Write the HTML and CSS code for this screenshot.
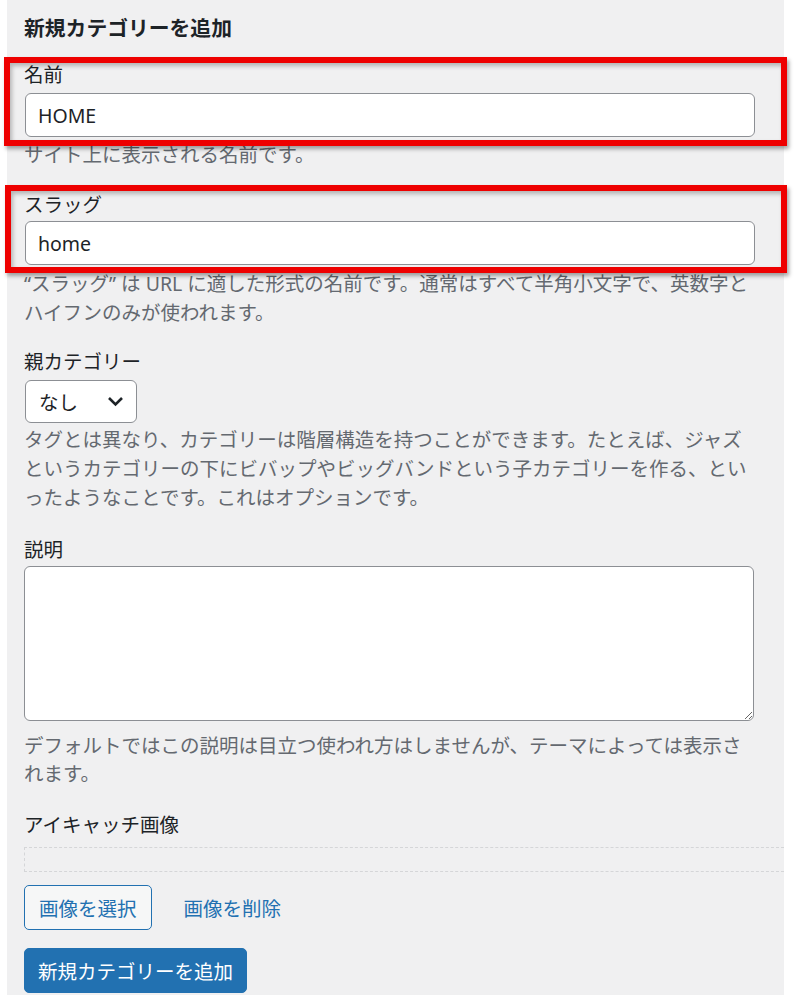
FILE: index.html
```html
<!DOCTYPE html>
<html lang="ja">

<head>
  <meta charset="utf-8" />
  <meta name="viewport" content="width=device-width, initial-scale=1.0" />
  <title>新規カテゴリーを追加</title>
  <link rel="stylesheet" href="styles.css">
</head>

<body>
  <div class="panel">
    <h2 class="title">新規カテゴリーを追加</h2>

    <div class="field">
      <span class="mark mark-name"></span>
      <label class="label" for="tag-name">名前</label>
      <input class="text" id="tag-name" type="text" value="HOME" />
      <p class="hint">サイト上に表示される名前です。</p>
    </div>

    <div class="field field-slug">
      <span class="mark mark-slug"></span>
      <label class="label" for="tag-slug">スラッグ</label>
      <input class="text" id="tag-slug" type="text" value="home" />
      <p class="hint">“スラッグ” は URL に適した形式の名前です。通常はすべて半角小文字で、英数字と<br>ハイフンのみが使われます。</p>
    </div>

    <div class="field field-parent">
      <label class="label">親カテゴリー</label>
      <div class="select">
        <span>なし</span>
        <svg width="17" height="11" viewBox="0 0 17 11">
          <polyline points="2,2 8.5,8.5 15,2" fill="none" stroke="#1d2327" stroke-width="2.6" />
        </svg>
      </div>
      <p class="hint">タグとは異なり、カテゴリーは階層構造を持つことができます。たとえば、ジャズ<br>というカテゴリーの下にビバップやビッグバンドという子カテゴリーを作る、とい<br>ったようなことです。これはオプションです。</p>
    </div>

    <div class="field field-desc">
      <label class="label" for="tag-description">説明</label>
      <textarea class="area" id="tag-description"></textarea>
      <p class="hint">デフォルトではこの説明は目立つ使われ方はしませんが、テーマによっては表示さ<br>れます。</p>
    </div>

    <div class="field field-thumb">
      <label class="label">アイキャッチ画像</label>
      <div class="thumb"></div>
      <div class="thumb-actions">
        <button class="button" type="button">画像を選択</button>
        <a class="remove" href="#">画像を削除</a>
      </div>
    </div>

    <button class="button button-primary" type="submit">新規カテゴリーを追加</button>
  </div>
</body>

</html>
```

FILE: styles.css
```css
* {
  padding: 0;
  margin: 0;
  box-sizing: border-box;
}

body {
  background: #fff;
  font-family: "Noto Sans", "Noto Sans CJK JP", sans-serif;
  font-size: 19.5px;
  color: #1d2327;
}

.panel {
  margin-left: 7px;
  width: 777px;
  min-height: 995px;
  padding: 14px 0 0 17px;
  background: #f0f0f1;
}

.title {
  font-size: 20.8px;
  font-weight: 700;
  line-height: 29px;
  margin-bottom: 17px;
}

.field {
  position: relative;
  margin-bottom: 21px;
}

.label {
  display: block;
  line-height: 29px;
  margin-bottom: 4px;
}

.hint {
  margin-top: 3px;
  line-height: 29px;
  color: #646970;
  white-space: nowrap;
}

.text {
  display: block;
  width: 730px;
  height: 44px;
  margin-left: 1px;
  padding: 0 12px;
  border: 1px solid #8c8f94;
  border-radius: 6px;
  background: #fff;
  font: inherit;
  color: #1d2327;
}

/* annotation frames */
.mark {
  position: absolute;
  left: -20px;
  right: -3px;
  border: 6px solid #ee0000;
  box-shadow: 2px 3px 4px rgba(0, 0, 0, 0.35), inset 2px 3px 4px rgba(0, 0, 0, 0.25);
  pointer-events: none;
}

.mark-name {
  top: -3px;
  height: 89px;
}

.mark-slug {
  top: -5px;
  left: -19px;
  height: 88px;
}

.field-slug .label {
  margin-bottom: 2px;
}

.field-slug .hint {
  margin-top: 4px;
}

.field-slug {
  margin-bottom: 20px;
}

.select {
  display: flex;
  align-items: center;
  justify-content: space-between;
  width: 112px;
  height: 43px;
  margin-left: 1px;
  padding: 0 12px 0 13px;
  border: 1px solid #8c8f94;
  border-radius: 6px;
  background: #fff;
}

.select svg {
  display: block;
}

.field-parent .hint {
  margin-top: 2px;
}

.field-parent {
  margin-bottom: 23px;
}

.field-desc .label {
  margin-bottom: 2px;
}

.area {
  display: block;
  width: 730px;
  height: 155px;
  border: 1px solid #8c8f94;
  border-radius: 6px;
  background: #fff;
  resize: vertical;
  font: inherit;
}

.field-desc .hint {
  margin-top: 11px;
  line-height: 28px;
}

.field-desc {
  margin-bottom: 22px;
}

.field-thumb .label {
  margin-bottom: 8px;
}

.thumb {
  width: 760px;
  height: 25px;
  border: 1px dashed #d5d6d8;
  border-right: none;
}

.thumb-actions {
  display: flex;
  align-items: center;
  gap: 32px;
  margin-top: 13px;
}

.field-thumb {
  margin-bottom: 18px;
}

.button {
  height: 45px;
  padding: 0 14px;
  border: 1px solid #2271b1;
  border-radius: 5px;
  background: #f6f7f7;
  color: #2271b1;
  font: inherit;
  cursor: pointer;
}

.button-primary {
  padding: 0 13px;
  background: #2271b1;
  color: #fff;
}

.remove {
  color: #2271b1;
  text-decoration: none;
}
```
